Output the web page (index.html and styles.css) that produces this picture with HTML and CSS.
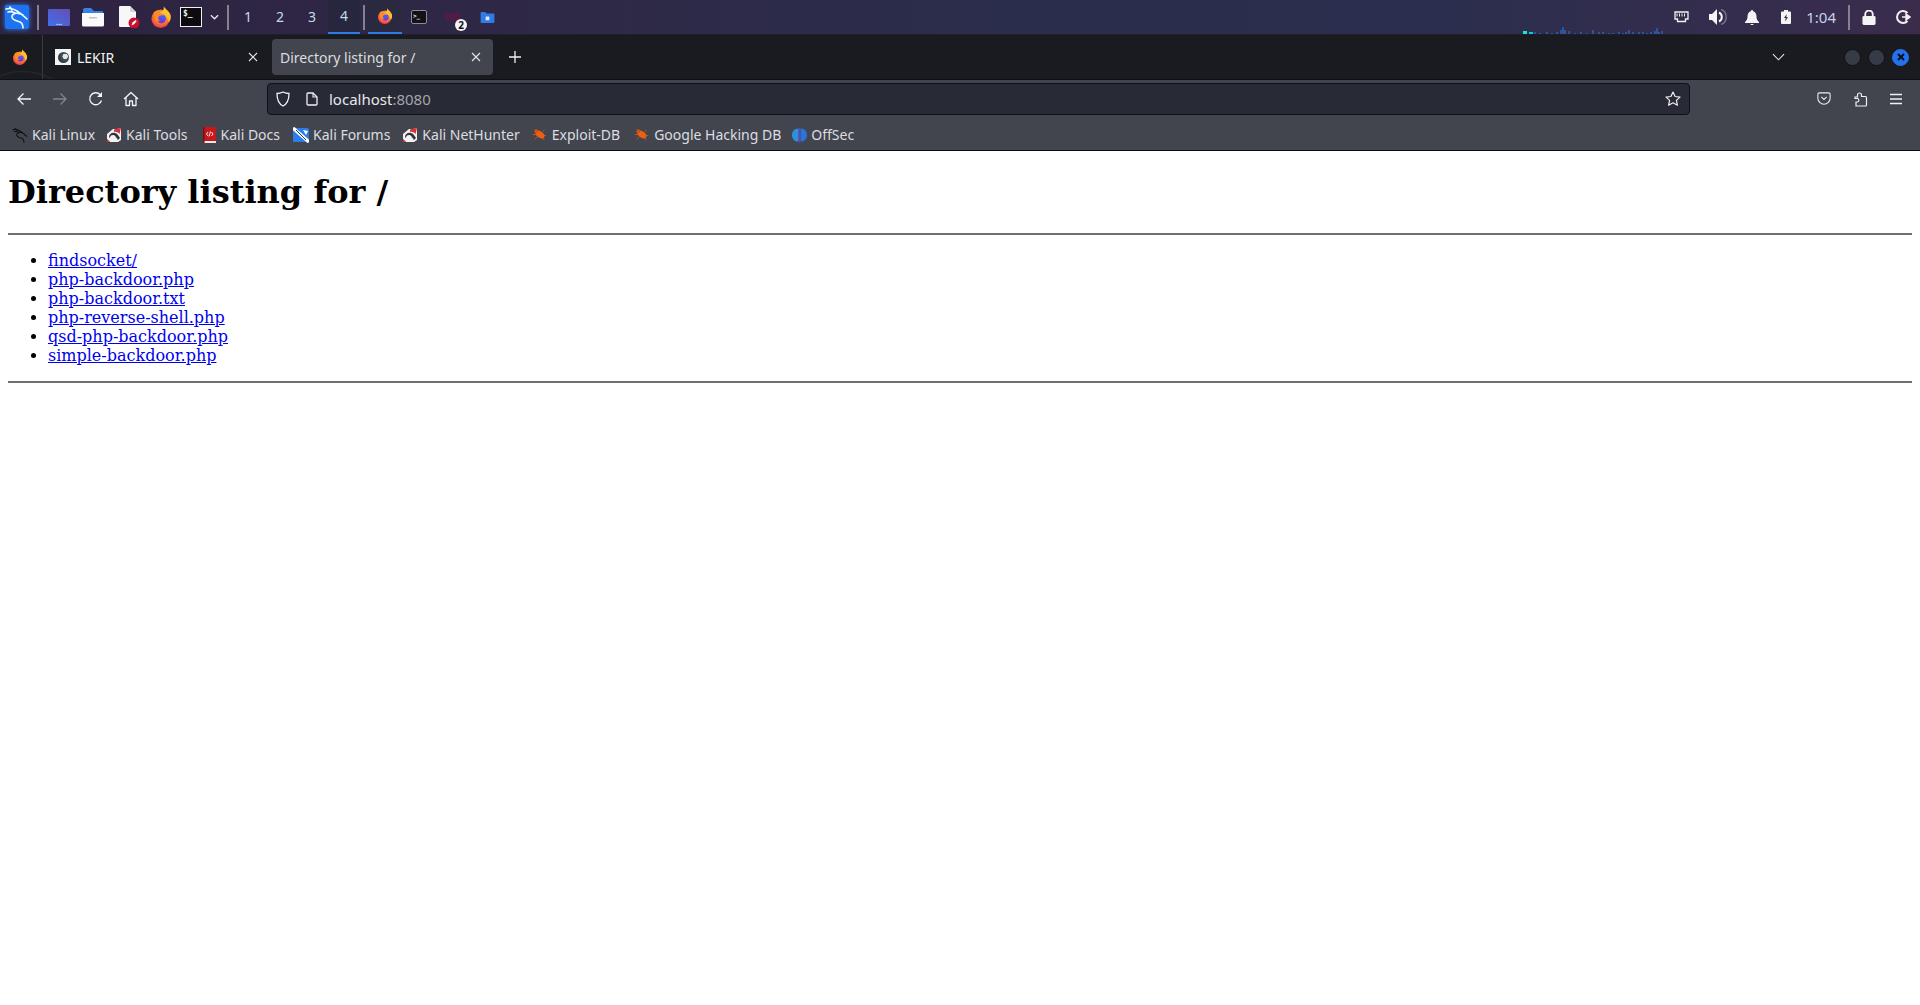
FILE: index.html
```html
<!DOCTYPE html>
<html lang="en">
<head>
<meta charset="utf-8">
<title>Directory listing for /</title>
<link rel="stylesheet" href="styles.css">
</head>
<body>
<svg class="defs" width="0" height="0" aria-hidden="true">
  <defs>
    <radialGradient id="fxOrange" cx="55%" cy="35%" r="70%">
      <stop offset="0" stop-color="#ffd93b"/><stop offset=".5" stop-color="#ff8a2a"/><stop offset="1" stop-color="#e8274c"/>
    </radialGradient>
    <linearGradient id="fxBlue" x1="0" y1="0" x2="0" y2="1">
      <stop offset="0" stop-color="#3f6bff"/><stop offset="1" stop-color="#7b2fd0"/>
    </linearGradient>
    <symbol id="firefox" viewBox="0 0 24 24">
      <circle cx="11.500" cy="14" r="10" fill="url(#fxOrange)"/>
      <path d="M15 0c1 3 6 5 7.500 10 .7 3-.3 6-2 8-1-6-4-10-8-11 2-2 3-4 2.500-7z" fill="#ffc12e"/>
      <circle cx="12.500" cy="14" r="5" fill="url(#fxBlue)"/>
      <path d="M4 7c3-2.500 7-3.500 10-2.500-2 1-3 2-3.500 3.500 2 0 4 .6 5 2.500-3-1-6 0-6.500 2-.5 2 1 3.500 3 4-3 .5-5.500-1-6.500-3.500C4.500 11 4 9 4 7z" fill="#ff8a2a"/>
    </symbol>
    <symbol id="dragon" viewBox="0 0 24 24">
      <path d="M1 4c4-1 8 0 11 2 3 2 6 4 10 8M5 2l2 3M3 7c3-1 5 0 7 1M18 10c-5-3-10-2-11 1-1 4 5 5 8 6 2 1 3 3 3 6" fill="none" stroke="currentColor" stroke-width="1.600" stroke-linecap="round"/>
    </symbol>
    <symbol id="kaliTool" viewBox="0 0 16 16">
      <path d="M1 7 7 2h4l4-1v12l-3 2H4l-3-3z" fill="#f2f2f2"/>
      <path d="M8 2.500 15 1l-1.500 6C12 5.500 10 4.500 8 5z" fill="#d8303a"/>
      <path d="M3 10c0-3 3-5 6-4 2 .5 3 2 5 5l-2 2c-2-3-3-5-5-5-2 0-3 1-3 3z" fill="#33333b"/>
      <path d="M1 12l3 3H1z" fill="#d8303a"/>
    </symbol>
    <symbol id="bug" viewBox="0 0 16 16">
      <path d="M3 3l4 3M1 8h4M3 13l3-3M13 3l-1 2M15 9h-3M13 14l-2-3" stroke="#c9541d" stroke-width="1" fill="none"/>
      <ellipse cx="8.500" cy="8" rx="5.500" ry="3.400" transform="rotate(35 8.500 8)" fill="#ee5e15"/>
      <circle cx="4.500" cy="4.500" r="2" fill="#d94f10"/>
    </symbol>
  </defs>
</svg>

<header class="taskbar">
  <div class="launchers">
    <span class="kali-btn">
      <svg viewBox="0 0 24 24" width="24" height="24" class="kali-logo"><use href="#dragon"/></svg>
    </span>
    <span class="sep sep-first"></span>
    <span class="desk-icon" aria-label="Show desktop"><span class="dots">...</span></span>
    <svg class="folder-icon" viewBox="0 0 22 20" width="22" height="20">
      <path d="M1 3a2 2 0 0 1 2-2h6l3 3h8a1 1 0 0 1 1 1v3H1z" fill="#3584e4"/>
      <path d="M0 6h22v12a1.500 1.500 0 0 1-1.500 1.500h-19A1.500 1.500 0 0 1 0 18z" fill="#fafafa"/>
      <path d="M7 10h8v1.500H7z" fill="#c6c6c6"/>
    </svg>
    <svg class="doc-icon" viewBox="0 0 22 22" width="22" height="22">
      <path d="M1 1a1 1 0 0 1 1-1h10l6 6v14a1 1 0 0 1-1 1H2a1 1 0 0 1-1-1z" fill="#f7f7f7"/>
      <path d="M12 0l6 6h-5a1 1 0 0 1-1-1z" fill="#d3d3d3"/>
      <circle cx="16" cy="17" r="5.500" fill="#c8102e"/>
      <path d="M13.500 19.500l1-3 3-2.500 1.200 1.300-2.700 3z" fill="#fff"/>
    </svg>
    <svg class="fx-icon" width="22" height="24"><use href="#firefox"/></svg>
    <span class="term-icon">$_</span>
    <svg class="chev-small" viewBox="0 0 10 6" width="9" height="6"><path d="M1 1l4 4 4-4" fill="none" stroke="#e8e8f0" stroke-width="1.500"/></svg>
    <span class="sep sep-second"></span>
  </div>
  <nav class="workspaces">
    <span class="ws">1</span>
    <span class="ws">2</span>
    <span class="ws">3</span>
    <span class="ws ws-active">4</span>
  </nav>
  <span class="sep sep-third"></span>
  <div class="tasks">
    <span class="task task-active"><svg width="16" height="16"><use href="#firefox"/></svg></span>
    <span class="task"><span class="term-mini">&gt;_</span></span>
    <span class="task"><span class="dark-win"></span><span class="badge">2</span></span>
    <svg class="blue-folder" viewBox="0 0 15 12" width="15" height="11">
      <path d="M0 1a1 1 0 0 1 1-1h4l1.500 1.500H14a1 1 0 0 1 1 1V11a1 1 0 0 1-1 1H1a1 1 0 0 1-1-1z" fill="#2f7be8"/>
      <rect x="5.500" y="5" width="4" height="4" fill="#dfeaff"/>
    </svg>
  </div>
  <div class="tray">
    <svg class="graph" viewBox="0 0 141 7" width="141" height="7">
      <rect x="0" y="4" width="4" height="3" fill="#19e6d6"/>
      <rect x="6" y="5" width="4" height="2" fill="#16c9c9"/>
      <path d="M12 5v2M17 6v1M24 5v2M29 6v1M34 5v2M38 3v4M40 0v7M42 3v4M46 4v3M52 6v1M58 5v2M64 6v1M70 3v4M76 5v2M80 5v2M86 6v1M90 6v1M96 5v2M100 6v1M103 5v2M106 3v4M110 5v2M116 5v2M120 5v2M124 6v1M128 5v2M132 4v3M136 5v2M134 1v6M139 4v3" stroke="#2d7cf0" stroke-width="1"/>
    </svg>
    <svg class="tray-net" viewBox="0 0 14 12" width="15" height="12"><path d="M.5 1h13v7h-2.500v2.500h-8V8H.5z" fill="none" stroke="#f2f2f2" stroke-width="1.300"/><path d="M2.500 2.500v3M5 2.500v3M7.500 2.500v3M10 2.500v3" stroke="#f2f2f2" stroke-width="1"/></svg>
    <svg class="tray-vol" viewBox="0 0 18 16" width="18" height="16"><path d="M0 5h3l5-5v16l-5-5H0z" fill="#f4f4f4"/><path d="M10 3.500a5 5 0 0 1 0 9" fill="none" stroke="#f4f4f4" stroke-width="2"/><path d="M12 .5a8 8 0 0 1 0 15" fill="none" stroke="#77708a" stroke-width="1.500"/></svg>
    <svg class="tray-bell" viewBox="0 0 14 15" width="14" height="15"><path d="M7 0a1.200 1.200 0 0 1 1.200 1.200C10.500 2 11.500 4 11.500 6.500c0 2.500.6 3.500 2.500 5.500v1H0v-1c1.900-2 2.500-3 2.500-5.500C2.500 4 3.500 2 5.800 1.200A1.200 1.200 0 0 1 7 0z" fill="#f4f4f4"/><path d="M5.500 14h3a1.500 1.500 0 0 1-3 0z" fill="#f4f4f4"/></svg>
    <svg class="tray-bat" viewBox="0 0 10 14" width="10" height="14"><path d="M3 0h4v1.500h2a1 1 0 0 1 1 1V13a1 1 0 0 1-1 1H1a1 1 0 0 1-1-1V2.500a1 1 0 0 1 1-1h2z" fill="#f4f4f4"/><path d="M5.800 4 3 8h1.800L4 11.500 7 7.200H5.200z" fill="#2f2840"/></svg>
    <span class="clock">1:04</span>
    <span class="sep sep-tray"></span>
    <svg class="tray-lock" viewBox="0 0 14 16" width="14" height="15"><path d="M3 7V4.500a4 4 0 0 1 8 0V7" fill="none" stroke="#f4f4f4" stroke-width="2"/><rect y="6.500" width="14" height="9.500" rx="1.500" fill="#f4f4f4"/></svg>
    <svg class="tray-out" viewBox="0 0 15 14" width="15" height="14"><path d="M11.500 3A6 6 0 1 0 11.500 11" fill="none" stroke="#f0f0f0" stroke-width="2"/><path d="M6 7h6M10 4l4 3-4 3z" stroke="#f0f0f0" stroke-width="1.500" fill="#f0f0f0"/></svg>
  </div>
</header>

<section class="browser">
  <div class="tabbar">
    <svg class="swoosh" viewBox="0 0 60 12" width="60" height="12"><path d="M0 9C14 3 34 2 52 12" fill="none" stroke="#25262c" stroke-width="1.500"/></svg>
    <span class="fx-slot"><svg width="16" height="16"><use href="#firefox"/></svg></span>
    <div class="tab">
      <span class="favicon"><span class="fav-disc"></span></span>
      <span class="tab-title">LEKIR</span>
      <svg class="tab-x" viewBox="0 0 10 10" width="10" height="10"><path d="M1 1l8 8M9 1l-8 8" stroke="#e6e6e8" stroke-width="1.100"/></svg>
    </div>
    <div class="tab tab-current">
      <span class="tab-title">Directory listing for /</span>
      <svg class="tab-x" viewBox="0 0 10 10" width="10" height="10"><path d="M1 1l8 8M9 1l-8 8" stroke="#e6e6e8" stroke-width="1.100"/></svg>
    </div>
    <svg class="plus" viewBox="0 0 12 12" width="12" height="12"><path d="M6 0v12M0 6h12" stroke="#f2f2f2" stroke-width="1.300"/></svg>
    <svg class="tab-list" viewBox="0 0 14 8" width="13" height="8"><path d="M1 1l6 6 6-6" fill="none" stroke="#e6e6e8" stroke-width="1.200"/></svg>
    <div class="win-btns">
      <span class="win-btn"></span>
      <span class="win-btn"></span>
      <span class="win-btn win-close"><svg viewBox="0 0 8 8" width="8" height="8"><path d="M1 1l6 6M7 1L1 7" stroke="#0b0f1c" stroke-width="1.900"/></svg></span>
    </div>
  </div>

  <div class="navbar">
    <svg class="nav-icon nav-back" viewBox="0 0 16 16" width="16" height="16"><path d="M15 8H2M7.500 2.500 2 8l5.500 5.500" fill="none" stroke="#f4f4f6" stroke-width="1.300"/></svg>
    <svg class="nav-icon nav-fwd" viewBox="0 0 16 16" width="16" height="16"><path d="M1 8h13M8.500 2.500 14 8l-5.500 5.500" fill="none" stroke="#82848a" stroke-width="1.300"/></svg>
    <svg class="nav-icon nav-reload" viewBox="0 0 16 16" width="16" height="16"><path d="M13.500 9.500A6 6 0 1 1 12 3.500" fill="none" stroke="#f4f4f6" stroke-width="1.300"/><path d="M14 1v5H9z" fill="#f4f4f6"/></svg>
    <svg class="nav-icon nav-home" viewBox="0 0 16 16" width="16" height="16"><path d="M1 8 8 1.500 15 8M3 6.500V14.500h3.500V10h3v4.500H13V6.500" fill="none" stroke="#f4f4f6" stroke-width="1.300" stroke-linejoin="round"/></svg>
    <div class="urlbar">
      <svg class="shield" viewBox="0 0 16 16" width="16" height="16"><path d="M8 1c2 1 4 1.500 6 1.500 0 6-1 10-6 12.500C3 12.500 2 8.500 2 2.500 4 2.500 6 2 8 1z" fill="none" stroke="#f0f0f2" stroke-width="1.300"/></svg>
      <svg class="page-ico" viewBox="0 0 12 14" width="12" height="14"><path d="M1 2a1 1 0 0 1 1-1h5l4 4v7a1 1 0 0 1-1 1H2a1 1 0 0 1-1-1z" fill="none" stroke="#f0f0f2" stroke-width="1.300"/><path d="M7 1v4h4" fill="none" stroke="#f0f0f2" stroke-width="1.100"/></svg>
      <span class="url">localhost<span class="url-port">:8080</span></span>
      <svg class="star" viewBox="0 0 16 16" width="16" height="16"><path d="M8 1l2.100 4.500 4.900.6-3.600 3.300 1 4.800L8 11.800l-4.400 2.400 1-4.800L1 6.100l4.900-.6z" fill="none" stroke="#f0f0f2" stroke-width="1.200" stroke-linejoin="round"/></svg>
    </div>
    <svg class="nav-icon nav-pocket" viewBox="0 0 16 16" width="16" height="14"><path d="M1 2.500A1.500 1.500 0 0 1 2.500 1h11A1.500 1.500 0 0 1 15 2.500V7a7 7 0 0 1-14 0z" fill="none" stroke="#f0f0f2" stroke-width="1.200"/><path d="M5 5.500 8 8.500l3-3" fill="none" stroke="#f0f0f2" stroke-width="1.200"/></svg>
    <svg class="nav-icon nav-ext" viewBox="0 0 16 16" width="16" height="16"><path d="M2 6h2.500a1.500 1.500 0 0 1 0-1V4a2 2 0 1 1 4 0v1.500h4a1 1 0 0 1 1 1V14a1 1 0 0 1-1 1H3V11h1.500a1.800 1.800 0 0 0 0-3.500H2z" fill="none" stroke="#f0f0f2" stroke-width="1.200"/></svg>
    <svg class="nav-icon nav-menu" viewBox="0 0 14 12" width="14" height="12"><path d="M1 1.500h12M1 6h12M1 10.500h12" stroke="#f0f0f2" stroke-width="1.300"/></svg>
  </div>

  <div class="bookmarks">
    <a class="bm bm-linux"><svg class="bm-dragon" width="16" height="16"><use href="#dragon"/></svg>Kali Linux</a>
    <a class="bm bm-tools"><svg width="16" height="16"><use href="#kaliTool"/></svg>Kali Tools</a>
    <a class="bm bm-docs"><svg viewBox="0 0 13 16" width="13" height="16"><rect width="13" height="15" rx="1" fill="#c8161d"/><rect y="14" width="13" height="2" fill="#e9e9e9"/><path d="M0 0h1.500v16H0z" fill="#7d0d12"/><path d="M5 5 3.500 7 5 9M8.500 5 10 7 8.500 9M7.500 4.500 6 9.500" fill="none" stroke="#fff" stroke-width=".9"/></svg>Kali Docs</a>
    <a class="bm bm-forums"><svg viewBox="0 0 16 16" width="16" height="16"><rect y="1" width="16" height="14" rx="1.500" fill="#2b7de9"/><path d="M0 1 16 15" stroke="#fff" stroke-width="3.500"/><path d="M3 3l10 10" stroke="#30343c" stroke-width="1"/><path d="M10 3l5 1-2 4z" fill="#fff"/></svg>Kali Forums</a>
    <a class="bm bm-hunter"><svg width="16" height="16"><use href="#kaliTool"/></svg>Kali NetHunter</a>
    <a class="bm bm-edb"><svg width="15" height="15"><use href="#bug"/></svg>Exploit-DB</a>
    <a class="bm bm-ghdb"><svg width="15" height="15"><use href="#bug"/></svg>Google Hacking DB</a>
    <a class="bm"><svg viewBox="0 0 16 16" width="15" height="16"><path d="M7 1C1.500 1 0 5 0 8s1.500 7 7 7z" fill="#2c92d8"/><path d="M9 1c5.500 0 7 4 7 7s-1.500 7-7 7z" fill="#2c72d8"/><path d="M8 0v16" stroke="#6a3bd0" stroke-width="1.300"/></svg>OffSec</a>
  </div>
</section>

<main class="page">
  <h1>Directory listing for /</h1>
  <hr>
  <ul>
    <li><a href="#">findsocket/</a></li>
    <li><a href="#">php-backdoor.php</a></li>
    <li><a href="#">php-backdoor.txt</a></li>
    <li><a href="#">php-reverse-shell.php</a></li>
    <li><a href="#">qsd-php-backdoor.php</a></li>
    <li><a href="#">simple-backdoor.php</a></li>
  </ul>
  <hr>
</main>
</body>
</html>
```

FILE: styles.css
```css
* { box-sizing: border-box; }
html, body { margin: 0; height: 100%; background: #fff; }
body { overflow: hidden; font-family: "DejaVu Serif", serif; }
.defs { position: absolute; }

/* ---------- desktop panel ---------- */
.taskbar {
  display: flex;
  align-items: center;
  height: 35px;
  border-bottom: 1px solid #211e2c;
  background: linear-gradient(90deg, #2e2340 0%, #2e2947 30%, #2a2e4c 55%, #2b2e4e 75%, #3b2c4c 100%);
  font-family: "Noto Sans", sans-serif;
  color: #c9d6f2;
}
.launchers { display: flex; align-items: center; height: 34px; padding-left: 5px; }
.kali-btn {
  display: flex; width: 24px; height: 24px; border-radius: 2px;
  background: #1c74f2; box-shadow: 0 0 5px #2b7ff5; color: #f4f8ff;
}
.sep { width: 2px; height: 25px; background: #84828f; flex: none; }
.sep-first { margin-left: 8px; }
.sep-second { margin-left: 8px; }
.sep-third { margin-left: 3px; }
.sep-tray { margin: 0 12px; }
.desk-icon {
  display: flex; align-items: flex-end; justify-content: center;
  width: 22px; height: 17px; margin-left: 9px; border-radius: 1px;
  background: linear-gradient(35deg, #3d72e8, #6a4bb4);
}
.dots { font-size: 7px; line-height: 6px; height: 6px; color: #e6ecff; font-weight: 700; }
.folder-icon { margin-left: 12px; }
.doc-icon { margin-left: 14px; }
.fx-icon { margin-left: 10px; }
.term-icon {
  width: 22px; height: 20px; margin-left: 8px; padding: 0 0 0 2px;
  border: 1px solid #f0f0f0; background: #0c0c10; color: #f0f0f0;
  font: 700 8px/11px "DejaVu Sans Mono", monospace;
}
.chev-small { margin-left: 8px; }
.workspaces { display: flex; height: 34px; margin-left: 3px; }
.ws {
  display: flex; align-items: center; justify-content: center;
  width: 32px; height: 34px; font-size: 14px; padding-bottom: 1px;
}
.ws-active { background: #26263e; border-bottom: 2px solid #2a7de8; }
.tasks { display: flex; align-items: center; height: 34px; margin-left: 3px; }
.task {
  position: relative;
  display: flex; align-items: center; justify-content: center;
  width: 34px; height: 34px;
}
.task-active { background: #2a2940; border-bottom: 2px solid #2a7de8; }
.term-mini {
  width: 16px; height: 14px; padding-left: 1px; border: 1px solid #8b8b95; border-radius: 2px;
  background: #111116; color: #e8e8e8; font: 700 6px/9px "DejaVu Sans Mono", monospace;
}
.dark-win { width: 16px; height: 8px; background: #4f1c46; margin-top: -1px; }
.badge {
  position: absolute; left: 19px; top: 19px;
  width: 12px; height: 12px; border-radius: 50%;
  background: #f4f4f4; color: #111; font: 700 10px/12px "Noto Sans", sans-serif; text-align: center;
}
.blue-folder { margin-left: 10px; }
.tray { display: flex; align-items: center; height: 34px; margin-left: auto; padding-right: 9px; }
.graph { align-self: flex-end; margin-right: 10px; }
.tray-vol { margin-left: 20px; }
.tray-bell { margin-left: 18px; }
.tray-bat { margin-left: 22px; }
.clock { margin-left: 15px; font-size: 15px; color: #c4d2ee; }
.tray-out { margin-left: 20px; }

/* ---------- browser chrome ---------- */
.browser { font-family: "Noto Sans", sans-serif; color: #f1f1f3; }
.tabbar {
  position: relative;
  display: flex; align-items: center;
  height: 44px; padding-right: 11px;
  background: #1a1b20;
  font-size: 14px;
}
.swoosh { position: absolute; left: 0; bottom: 0; }
.fx-slot {
  position: relative;
  display: flex; align-items: center; justify-content: center;
  width: 43px; height: 44px; padding-right: 3px;
  border-right: 1px solid #3a3b42;
}
.tab {
  position: relative;
  display: flex; align-items: center;
  width: 221px; height: 36px; margin-left: 6px; padding: 0 12px 0 6px; gap: 6px;
  border-radius: 4px;
}
.tab-current { margin-left: 2px; padding-left: 8px; background: #42454d; color: #dcdde0; }
.tab-title { flex: 1; white-space: nowrap; }
.favicon {
  display: flex; align-items: center; justify-content: center;
  width: 16px; height: 16px; background: #f4f4f4;
}
.fav-disc { width: 11px; height: 11px; border-radius: 50%; background: radial-gradient(circle at 65% 40%, #e6e6e6 25%, #44505c 30%, #1e2a36 100%); }
.plus { margin-left: 16px; }
.tab-list { margin-left: auto; margin-right: 59px; }
.win-btns { display: flex; gap: 7px; }
.win-btn {
  display: flex; align-items: center; justify-content: center;
  width: 17px; height: 17px; border-radius: 50%;
  background: #363b47; border: 1px solid #111216;
}
.win-close { background: #2472ea; border-color: #2472ea; }

.navbar {
  display: flex; align-items: center;
  height: 36px; padding-top: 3px;
  border-top: 1px solid #0f1014;
  background: #42454d;
}
.nav-icon { flex: none; }
.nav-back { margin-left: 16px; }
.nav-fwd { margin-left: 20px; }
.nav-reload { margin-left: 20px; }
.nav-home { margin-left: 19px; }
.urlbar {
  display: flex; align-items: center;
  width: 1423px; height: 32px; margin-left: 128px;
  padding: 0 8px 0 7px;
  border: 1px solid #101117; border-radius: 4px;
  background: #282a35;
  font-size: 15px;
}
.shield { flex: none; }
.page-ico { margin-left: 15px; flex: none; }
.url { margin-left: 11px; color: #e8e8ea; }
.url-port { color: #a3a5ab; }
.star { margin-left: auto; }
.nav-pocket { margin-left: 126px; }
.nav-ext { margin-left: 21px; }
.nav-menu { margin-left: 20px; }

.bookmarks {
  display: flex; align-items: center;
  height: 36px; padding: 4px 0 0 12px;
  background: #42454d;
  border-bottom: 1px solid #0c0c0f;
  font-size: 14px;
  color: #dcdde0;
}
.bm { display: flex; align-items: center; gap: 4px; white-space: nowrap; }
.bm svg { flex: none; }
.bm-dragon { color: #111; }
.bm-linux { margin-right: 11px; }
.bm-tools { margin-right: 15px; }
.bm-docs { margin-right: 13px; gap: 5px; }
.bm-forums { margin-right: 12px; }
.bm-hunter { margin-right: 12px; }
.bm-edb { margin-right: 14px; gap: 5px; }
.bm-ghdb { margin-right: 11px; gap: 5px; }

/* ---------- served page ---------- */
.page { padding: 8px; }
.page h1 { margin: 14px 0 22px; font-size: 32px; font-family: "DejaVu Serif", serif; }
.page hr { height: 2px; margin: 8px 0; border: 0; background: #6f6f6f; }
.page ul { font-size: 16px; line-height: 19px; }
```
